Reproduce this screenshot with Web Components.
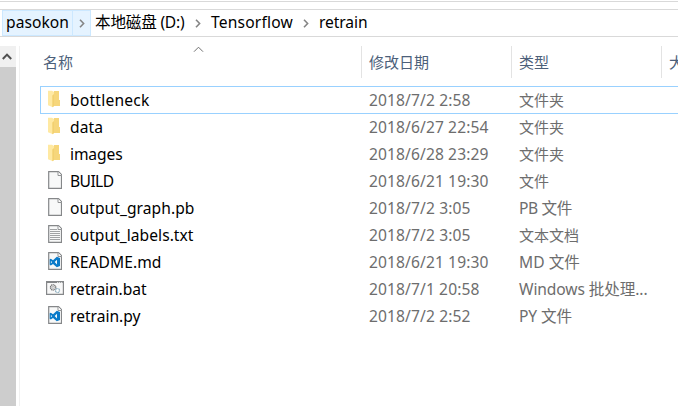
<!DOCTYPE html>
<html lang="zh-CN">
<head>
<meta charset="utf-8">
<title>retrain</title>
<style>
html,body{margin:0;height:100%;overflow:hidden;background:#fff}
body{font:15px/27px "Noto Sans","Noto Sans CJK SC",sans-serif;color:#000}
</style>
</head>
<body>
<file-explorer></file-explorer>
<script>
const define = (name, html, setup) => customElements.define(name, class extends HTMLElement {
  connectedCallback() {
    if (this.shadowRoot) return;
    const root = this.attachShadow({mode: 'open'});
    const t = document.createElement('template');
    t.innerHTML = typeof html === 'function' ? html(this) : html;
    root.append(t.content.cloneNode(true));
    if (setup) setup(this, root);
  }
});

/* Spaces the label's letters so that it takes the width given in "w". */
define('fit-text', `<style>:host{display:inline-block;white-space:pre}span{display:inline-block}</style><span><slot></slot></span>`,
  (el, root) => {
    const w = +el.getAttribute('w');
    if (!w) return;
    const s = root.querySelector('span');
    if (/[a-z0-9]/i.test(el.textContent)) s.style.fontSize = '15.6px';
    s.style.letterSpacing = (w - s.getBoundingClientRect().width) / el.textContent.length + 'px';
  });

const page = `<path d="M.7.7h9.8l3 3v13.6H.7z" fill="#f8f9f9" stroke="#858789" stroke-width="1.2"/><path d="M10 .7v3.8h3.5" fill="#fff" stroke="#929496"/>`;
const icons = {
  folder: [14, 18, `<path d="M6 1h5v9h1v6H4z" fill="#f6d67b"/><path d="M0 .8h4l2 1.2v13l-1 2.3-5-2z" fill="#ffe9a2"/><path d="M4.3 17.2V5.6L6 4v12.3z" fill="#f2d070"/>`],
  file: [14, 18, page],
  text: [14, 18, page + `<path d="M2 4.5h7M2 6.5h10M2 8.5h10M2 10.5h10M2 12.5h10M2 14.5h10" stroke="#a1a3a5" fill="none"/>`],
  code: [14, 18, page + `<path fill-rule="evenodd" d="M8.8 4.8 12 6v8l-3.2 1.3L5 11.9l-2.2 1.6-1.1-.7V7.3l1.1-.6L5 8.3zM9 7.8 6.7 10.1 9 12.4zM2.9 8.9v2.5l1.2-1.3z" fill="#0a7bc9"/>`],
  batch: [18, 14, `<path d="M.6.6h16.8v12.8H.6z" fill="#f8f8f8" stroke="#858789" stroke-width="1.2"/><path d="M1 1.5h10" stroke="#858789"/><path d="M12 1.2h1m1 0h1m1 0h1" stroke="#858789"/><circle cx="7.1" cy="6.4" r="2.7" fill="#ddd" stroke="#777" stroke-width="1.2" stroke-dasharray="1.2 .5"/><circle cx="7.1" cy="6.4" r="1" fill="#fff" stroke="#999" stroke-width=".6"/><circle cx="11.5" cy="9.5" r="2" fill="#fff" stroke="#86a9bb" stroke-width="1.2" stroke-dasharray="1 .4"/>`]
};
define('file-icon', el => {
  const [w, h, art] = icons[el.getAttribute('kind')];
  return `<style>:host{display:flex;justify-content:center;width:18px;padding:0 0 3px 1px}svg{display:block}</style><svg width="${w}" height="${h}" viewBox="0 0 ${w} ${h}">${art}</svg>`;
});

define('crumb-item', `<style>
:host{display:flex;height:26px;box-sizing:border-box;align-items:center}
:host([active]){background:#e5f3ff;box-shadow:inset 0 0 0 1px #cce8ff}
.name{width:var(--name);box-sizing:border-box;padding:0 0 1px 4px;height:100%;display:flex;align-items:center}
:host([active]) .name{border-right:1px solid #cce8ff}
.arrow{width:18px;display:flex;justify-content:center}
:host([last]) .arrow{display:none}
</style><div class="name"><slot></slot></div><div class="arrow"><svg width="6" height="9" viewBox="0 0 6 9"><path d="M1 .8 4.6 4.5 1 8.2" fill="none" stroke="#858585" stroke-width="1.6"/></svg></div>`);

define('address-bar', `<style>
:host{display:block;padding-top:1px}
.top{height:7px;border-top:1px solid #d9d9d9}
.bar{display:flex;height:26px;padding-left:2px;border:solid #d9d9d9;border-width:1px 0}
</style><div class="top"></div><div class="bar"><slot></slot></div>`);

define('scroll-rail', `<style>
:host{display:flex;flex-direction:column;width:16px;background:#cdcdcd}
div{height:21px;background:#f0f0f0;display:flex;align-items:center;justify-content:center;padding-right:3px}
</style><div><svg width="10" height="7" viewBox="0 0 10 7"><path d="M.8 6 5 1.6 9.2 6" fill="none" stroke="#505050" stroke-width="2"/></svg></div>`);

define('column-header', `<style>
:host{display:grid;grid-template-columns:321px 150px 150px 1fr;height:32px;padding-left:21px;color:#4c607a;white-space:nowrap}
div{border-right:1px solid #e3e3e3;padding:3px 0 0 7px;box-sizing:border-box;position:relative}
div:first-of-type{padding-left:2px}
div:last-of-type{border:0}
svg{position:absolute;left:152px;top:0}
</style><div>名称<svg width="11" height="7" viewBox="0 0 11 7"><path d="M1 5.7 5.5 1.2 10 5.7" fill="none" stroke="#707070"/></svg></div><div>修改日期</div><div>类型</div><div>大小</div>`);

define('file-row', el => {
  const a = n => el.getAttribute(n);
  return `<style>
:host{display:grid;grid-template-columns:25px 299px 150px 1fr;height:27px;padding:2px 0 0 5px;margin-left:20px;align-items:center;white-space:nowrap;box-sizing:border-box}
:host([selected]){box-shadow:inset 0 1px #99d1ff,inset 1px 0 #99d1ff,0 1px #99d1ff}
fit-text{line-height:25px}
.meta{color:#6d6d6d}
</style><file-icon kind="${a('kind')}"></file-icon><fit-text w="${a('nw')}">${a('name')}</fit-text><fit-text class="meta" w="${a('dw')}">${a('date')}</fit-text><fit-text class="meta" w="${a('tw') || ''}">${a('type')}</fit-text>`;
});

const files = [
  ['folder','bottleneck',79.5,'2018/7/2 2:58',101.5,'文件夹',45],
  ['folder','data',33,'2018/6/27 22:54',119.5,'文件夹',45],
  ['folder','images',52.5,'2018/6/28 23:29',119.5,'文件夹',45],
  ['file','BUILD',43.5,'2018/6/21 19:30',119.5,'文件',30],
  ['file','output_graph.pb',124.5,'2018/7/2 3:05',101.5,'PB 文件',53],
  ['text','output_labels.txt',123.5,'2018/7/2 3:05',101.5,'文本文档',60],
  ['code','README.md',91.5,'2018/6/21 19:30',119.5,'MD 文件',61],
  ['batch','retrain.bat',76.5,'2018/7/1 20:58',110.5,'Windows 批处理...',128.5],
  ['code','retrain.py',70.5,'2018/7/2 2:52',101.5,'PY 文件',53]
];
define('file-list', () => `<style>:host{display:block;padding-top:8px}</style>` +
  files.map(([k,n,nw,d,dw,t,tw], i) => `<file-row kind="${k}" name="${n}" nw="${nw}" date="${d}" dw="${dw}" type="${t}" tw="${tw}"${i ? '' : ' selected'}></file-row>`).join(''));

define('file-explorer', `<style>
:host{display:flex;flex-direction:column;height:100vh;overflow:hidden}
.body{display:flex;flex:1;padding-top:9px;min-height:0}
.gap{width:3px;border-right:1px solid #f0f0f0}
main{flex:1;min-width:0}
</style>
<address-bar>
<crumb-item active style="--name:71px"><fit-text w="63">pasokon</fit-text></crumb-item>
<crumb-item style="--name:98px"><fit-text w="89.5">本地磁盘 (D:)</fit-text></crumb-item>
<crumb-item style="--name:90px"><fit-text w="82">Tensorflow</fit-text></crumb-item>
<crumb-item last style="--name:90px"><fit-text w="48.5">retrain</fit-text></crumb-item>
</address-bar>
<div class="body"><scroll-rail></scroll-rail><div class="gap"></div><main><column-header></column-header><file-list></file-list></main></div>`);
</script>
</body>
</html>
